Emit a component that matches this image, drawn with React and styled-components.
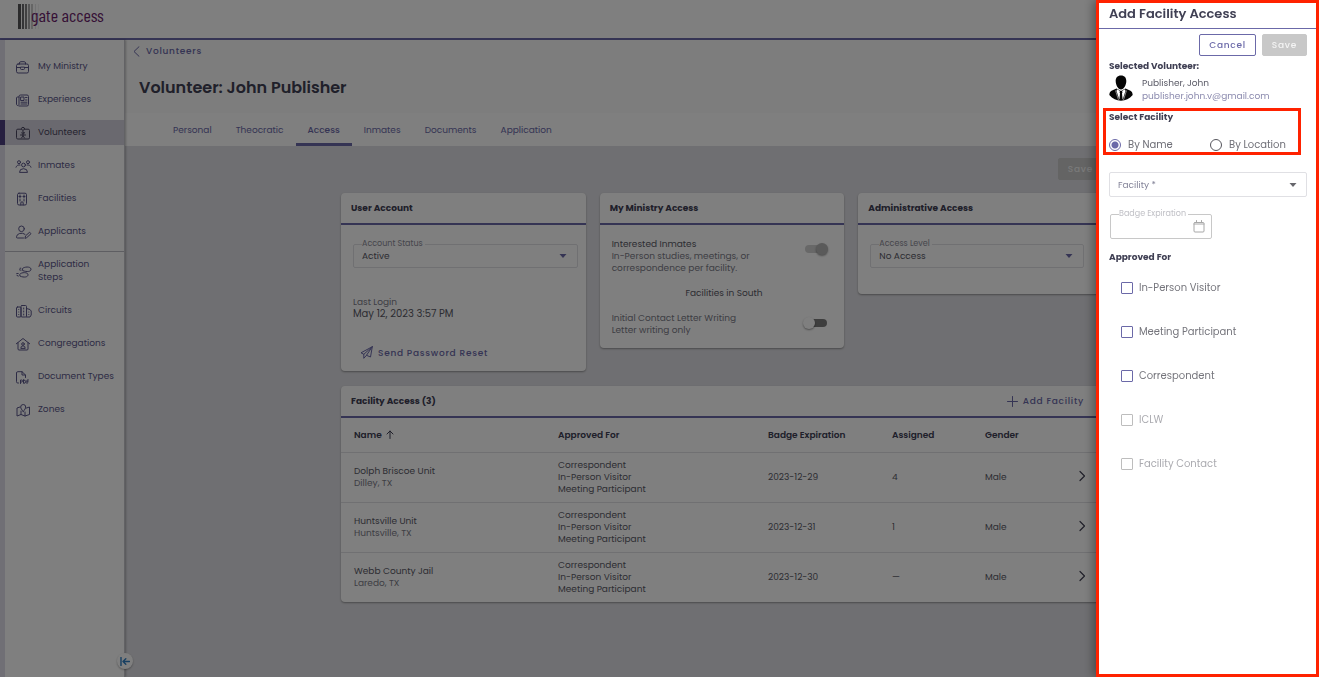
import React, { useState } from "react";
import styled, { createGlobalStyle, ThemeProvider } from "styled-components";

const theme = {
    accent: "#6b69a8",
    nav: "#5b578a",
    heading: "#404054",
    text: "#5a5a66",
    muted: "#7c7c88",
    line: "#e0e0e4",
    canvas: "#dfdfe4",
    mark: "#ff2200",
};

const icons = {
    briefcase: <><rect x="1.5" y="5" width="12" height="9" rx="1.6" /><path d="M4.5 5V4a1.3 1.3 0 0 1 1.3-1.3h3.4A1.3 1.3 0 0 1 10.5 4v1M1.5 8.5h4M9.5 8.5h4M5.5 8.5v1a1 1 0 0 0 1 1h2a1 1 0 0 0 1-1v-1z" /></>,
    news: <><path d="M4 14h8a1.5 1.5 0 0 0 1.5-1.5v-8A1.5 1.5 0 0 0 12 3H5.5A1.5 1.5 0 0 0 4 4.5v8a1.3 1.3 0 0 1-2.5 0V6A1 1 0 0 1 2.5 5H4" /><rect x="6" y="5" width="3" height="3.5" /><path d="M10.5 5.5H12M10.5 8H12M6 10.2h6M6 12h6" /></>,
    badge: <><path d="M6 4.2H2.8A1.3 1.3 0 0 0 1.5 5.5v7.2A1.3 1.3 0 0 0 2.8 14h10.4a1.3 1.3 0 0 0 1.3-1.3V5.5a1.3 1.3 0 0 0-1.3-1.3H10" /><circle cx="8" cy="3.8" r="1.5" /><circle cx="8" cy="7.8" r="1.1" /><path d="M5.5 10h5M8 9.5V11l-1.5 2M8 11l1.5 2" /></>,
    group: <><circle cx="4" cy="4.2" r="1.5" /><circle cx="13" cy="4.2" r="1.5" /><circle cx="8.5" cy="7" r="1.9" /><path d="M4.5 14a4 3.3 0 0 1 8 0zM1 9.2A3 3 0 0 1 5 7M16 9.2A3 3 0 0 0 12 7" /></>,
    building: <><rect x="2.5" y="2.2" width="9" height="11.8" rx="1.5" /><path d="M5 4v3M9 4v3M4 5.5h2M8 5.5h2M5 8.5V10M9 8.5V10M5.8 14v-2a1.2 1.2 0 0 1 2.4 0v2" /></>,
    applicant: <><circle cx="6.5" cy="4.8" r="2.8" /><path d="M8.5 14h-6a1 1 0 0 1-1-1.2A5 3.8 0 0 1 10 10.3M10 14l.6-2.2 4-3.6L16 9.7l-4 3.7z" /></>,
    steps: <><path d="M7.5 5.5C9 3.6 15.5 3.2 16 6c.3 2.8-4 3.2-8 1.7zM5.8 5.2 5 5.3M6 7.2l-1.5-.4M5 11c1.5-2 7.8-1.9 8 .6s-4 3.3-7.7 1.6zM3.2 10.5l-1.5.1M3.3 13 2 12.5" /></>,
    circuits: <><rect x="1.5" y="4" width="4.5" height="10" rx="1" /><rect x="6" y="2.5" width="5.5" height="11.5" rx="1" /><path d="M11.5 5.5l3.5 1L16.2 8v4L15 14h-3.5M3.7 6.5h.1M3.7 9h.1M3.7 11.5h.1M8.7 5v1M8.7 8v1M8.7 11v1M13.8 9v.1M13.8 11.5v.1" /></>,
    house: <><path d="M1.3 7.8 8 2.5l6.700 5.300M3 6.700V13a1 1 0 0 0 1 1h8a1 1 0 0 0 1-1V6.700" /><circle cx="8" cy="8" r="1.3" /><path d="M5.8 12a2.2 2.2 0 0 1 4.4 0z" /></>,
    pdf: <><path d="M3.5 14h-.7a1.3 1.3 0 0 1-1.3-1.3V4a1.3 1.3 0 0 1 1.3-1.3H7L10.5 6v2.500M7 2.700V6h3.500" /><path d="M5.5 14.5V11h1a1 1 0 0 1 0 2h-1M8.5 11v3.3H9a1.6 1.6 0 0 0 0-3.3zM13.5 11H12v3.5M12 12.8h1.2" /></>,
    map: <><path d="M5 5 2 6v8l4-1.5 4 1.5 4.5-1.5V5l-3 1M6 9v3.500M10 10v4" /><path d="M8.2 9.5C6.6 7.5 5.7 6.3 5.7 5a2.5 2.5 0 0 1 5 0c0 1.3-.9 2.5-2.5 4.5z" /></>,
};

const mainLinks = [
    { label: "My Ministry", icon: "briefcase" },
    { label: "Experiences", icon: "news" },
    { label: "Volunteers", icon: "badge" },
    { label: "Inmates", icon: "group" },
    { label: "Facilities", icon: "building" },
    { label: "Applicants", icon: "applicant" },
];

const adminLinks = [
    { label: "Application Steps", icon: "steps" },
    { label: "Circuits", icon: "circuits" },
    { label: "Congregations", icon: "house" },
    { label: "Document Types", icon: "pdf" },
    { label: "Zones", icon: "map" },
];

const tabs = ["Personal", "Theocratic", "Access", "Inmates", "Documents", "Application"];

const facilities = [
    { name: "Dolph Briscoe Unit", city: "Dilley, TX", expires: "2023-12-29", assigned: "4", gender: "Male" },
    { name: "Huntsville Unit", city: "Huntsville, TX", expires: "2023-12-31", assigned: "1", gender: "Male" },
    { name: "Webb County Jail", city: "Laredo, TX", expires: "2023-12-30", assigned: "—", gender: "Male" },
];

const approvals = [
    { label: "In-Person Visitor" },
    { label: "Meeting Participant" },
    { label: "Correspondent" },
    { label: "ICLW", disabled: true },
    { label: "Facility Contact", disabled: true },
];

function NavGroup({ links }) {
    return (
        <NavList>
            {links.map((link) => (
                <li key={link.label}>
                    <NavLink href="#" $active={link.label === "Volunteers"}>
                        <Icon width="17" height="16" viewBox="0 0 17 16">{icons[link.icon]}</Icon>
                        <span>{link.label}</span>
                    </NavLink>
                </li>
            ))}
        </NavList>
    )
}

function OutlinedSelect({ id, label, value }) {
    return (
        <Outlined>
            <legend><label htmlFor={id}>{label}</label></legend>
            <SelectRow>
                <select id={id} defaultValue={value}>
                    <option>{value}</option>
                </select>
                <Caret />
            </SelectRow>
        </Outlined>
    )
}

function Caret() {
    return (
        <svg width="10" height="6" viewBox="0 0 10 6" aria-hidden="true">
            <path d="M1.5 1h7L5 5z" fill="currentColor" />
        </svg>
    )
}

function Logo() {
    const bars = [[0, 3, .8], [4, 2, .7], [7, 2, .6], [10, 2, .4], [13, 2, .25], [17, 1, .12], [20, 1, .06]];
    return (
        <Brand href="#">
            <svg width="24" height="25" viewBox="0 0 24 25" aria-hidden="true">
                {bars.map(([x, w, o]) => <rect key={x} x={x} width={w} height="25" fill="#2c2c30" opacity={o} />)}
            </svg>
            <span>gate access</span>
        </Brand>
    )
}

function FacilityTable() {
    return (
        <Table>
            <colgroup>
                <col className="name" />
                <col className="approved" />
                <col className="expires" />
                <col className="assigned" />
                <col className="gender" />
                <col />
            </colgroup>
            <thead>
                <tr>
                    <th>
                        Name
                        <Icon width="8" height="9" viewBox="0 0 8 9"><path d="M4 8.5V1M1 4l3-3 3 3" /></Icon>
                    </th>
                    <th>Approved For</th>
                    <th>Badge Expiration</th>
                    <th>Assigned</th>
                    <th>Gender</th>
                    <th></th>
                </tr>
            </thead>
            <tbody>
                {facilities.map((f) => (
                    <tr key={f.name}>
                        <td>{f.name}<small>{f.city}</small></td>
                        <td>Correspondent<br />In-Person Visitor<br />Meeting Participant</td>
                        <td>{f.expires}</td>
                        <td>{f.assigned}</td>
                        <td>{f.gender}</td>
                        <td className="open">
                            <PlainButton aria-label={"Open " + f.name}>
                                <Icon width="8" height="12" viewBox="0 0 8 12"><path d="M2 1.5 6.5 6 2 10.5" strokeWidth="1.2" /></Icon>
                            </PlainButton>
                        </td>
                    </tr>
                ))}
            </tbody>
        </Table>
    )
}

function FacilityDrawer() {
    const [mode, setMode] = useState("name");
    const [approved, setApproved] = useState([]);

    const toggle = (label) => setApproved(
        approved.includes(label) ? approved.filter((a) => a !== label) : [...approved, label]
    );

    return (
        <Drawer aria-label="Add Facility Access">
            <DrawerTitle>Add Facility Access</DrawerTitle>
            <DrawerBody>
                <Actions>
                    <OutlineButton>Cancel</OutlineButton>
                    <SaveButton disabled>Save</SaveButton>
                </Actions>
                <Label>Selected Volunteer:</Label>
                <Person>
                    <svg width="24" height="26" viewBox="0 0 24 26" aria-hidden="true">
                        <path d="M12 .5c3.600 0 5.400 2.400 5.300 5.800C17.200 10 15 14.500 12 14.500S6.800 10 6.700 6.300C6.600 2.900 8.400.500 12 .500z" fill="#050505" />
                        <path d="M7.500 13.500 12 16l4.500-2.500 5 2.300c1.400.700 2 2.200 2.200 4.200C20.500 24 16.500 25.700 12 25.700S3.500 24 .300 20c.200-2 .800-3.500 2.200-4.200z" fill="#050505" />
                        <path d="M8 14.200 11 16l-.500 1.200.500 1-.600 6.500L7.500 16zM16 14.200 13 16l.500 1.200-.5 1 .600 6.500L16.500 16z" fill="#fff" />
                        <path d="M6.500 15.500 9.500 25M17.500 15.500 14.500 25" stroke="#fff" strokeWidth=".5" />
                    </svg>
                    <div>
                        <p>Publisher, John</p>
                        <a href="mailto:publisher.john.v@gmail.com">publisher.john.v@gmail.com</a>
                    </div>
                </Person>
                <Marked>
                    <legend>Select Facility</legend>
                    <div>
                        <Choice>
                            <input type="radio" name="mode" checked={mode === "name"} onChange={() => setMode("name")} />
                            By Name
                        </Choice>
                        <Choice>
                            <input type="radio" name="mode" checked={mode === "location"} onChange={() => setMode("location")} />
                            By Location
                        </Choice>
                    </div>
                </Marked>
                <PlainSelect>
                    <select aria-label="Facility" defaultValue="">
                        <option value="">Facility *</option>
                    </select>
                    <Caret />
                </PlainSelect>
                <DateField disabled>
                    <legend><label htmlFor="badge">Badge Expiration</label></legend>
                    <SelectRow>
                        <input id="badge" type="text" />
                        <Icon width="12" height="13" viewBox="0 0 12 13">
                            <rect x="1" y="2.5" width="10" height="9.5" rx="1" />
                            <path d="M1 4h10M3.5 .5v2M8.5 .5v2" />
                        </Icon>
                    </SelectRow>
                </DateField>
                <Label>Approved For</Label>
                <CheckList>
                    {approvals.map((a) => (
                        <Check key={a.label} $disabled={a.disabled}>
                            <input
                                type="checkbox"
                                disabled={a.disabled}
                                checked={approved.includes(a.label)}
                                onChange={() => toggle(a.label)}
                            />
                            {a.label}
                        </Check>
                    ))}
                </CheckList>
            </DrawerBody>
        </Drawer>
    )
}

export default function App() {
    const [letters, setLetters] = useState(false);

    return (
        <ThemeProvider theme={theme}>
            <GlobalStyle />
            <Page>
                <TopBar><Logo /></TopBar>
                <Columns>
                    <Sidebar>
                        <NavGroup links={mainLinks} />
                        <NavGroup links={adminLinks} />
                        <Collapse aria-label="Collapse menu">
                            <Icon width="10" height="9" viewBox="0 0 10 9"><path d="M1 .5v8M9.5 4.5H3M5.8 1.7 3 4.5l2.8 2.8" strokeWidth="1.4" /></Icon>
                        </Collapse>
                    </Sidebar>
                    <Main>
                        <PageHead>
                            <BackLink href="#">
                                <Icon width="7" height="11" viewBox="0 0 7 11"><path d="M6 .7 1 5.5l5 4.8" /></Icon>
                                Volunteers
                            </BackLink>
                            <h1>Volunteer: John Publisher</h1>
                        </PageHead>
                        <Tabs>
                            {tabs.map((t) => <Tab key={t} href="#" $active={t === "Access"}>{t}</Tab>)}
                        </Tabs>
                        <Content>
                            <Actions><SaveButton disabled>Save</SaveButton></Actions>
                            <Cards>
                                <Card>
                                    <CardHead><h2>User Account</h2></CardHead>
                                    <CardBody>
                                        <OutlinedSelect id="status" label="Account Status" value="Active" />
                                        <Login>
                                            <p>Last Login</p>
                                            <strong>May 12, 2023 3:57 PM</strong>
                                        </Login>
                                        <TextButton>
                                            <Icon width="13" height="13" viewBox="0 0 13 13">
                                                <path d="M12.300.7 1 6.800l2.800 1.500L12.300.700 10.500 11 6.500 9.300M3.800 8.300v4l2.700-3L12.300.7" />
                                            </Icon>
                                            Send Password Reset
                                        </TextButton>
                                    </CardBody>
                                </Card>
                                <Card>
                                    <CardHead><h2>My Ministry Access</h2></CardHead>
                                    <CardBody>
                                        <Setting>
                                            <label htmlFor="interested">
                                                <b>Interested Inmates</b><br />
                                                In-Person studies, meetings, or correspondence per facility.
                                            </label>
                                            <Switch id="interested" defaultChecked disabled />
                                        </Setting>
                                        <Region>Facilities in South</Region>
                                        <Setting>
                                            <label htmlFor="letters">Initial Contact Letter Writing<br />Letter writing only</label>
                                            <Switch id="letters" checked={letters} onChange={() => setLetters(!letters)} />
                                        </Setting>
                                    </CardBody>
                                </Card>
                                <Card>
                                    <CardHead><h2>Administrative Access</h2></CardHead>
                                    <CardBody $wide>
                                        <OutlinedSelect id="level" label="Access Level" value="No Access" />
                                    </CardBody>
                                </Card>
                            </Cards>
                            <Card>
                                <CardHead>
                                    <h2>Facility Access (3)</h2>
                                    <PlainButton>
                                        <Icon width="11" height="11" viewBox="0 0 11 11"><path d="M5.5 .5v10M.5 5.5h10" /></Icon>
                                        Add Facility
                                    </PlainButton>
                                </CardHead>
                                <FacilityTable />
                            </Card>
                        </Content>
                    </Main>
                </Columns>
            </Page>
            <Backdrop />
            <FacilityDrawer />
        </ThemeProvider>
    )
}


const GlobalStyle = createGlobalStyle`
    * {
        box-sizing: border-box;
    }

    body {
        margin: 0;
    }

    body, button, input, select {
        font-family: Poppins, Inter, "Open Sans", sans-serif;
        font-size: 9px;
        line-height: 12px;
    }

    h1, h2, h3, p, ul, fieldset {
        margin: 0;
        padding: 0;
    }

    a {
        text-decoration: none;
    }
`

const Icon = styled.svg`
    flex: none;
    fill: none;
    stroke: currentColor;
    stroke-width: 1;
    stroke-linecap: round;
    stroke-linejoin: round;
`

const Page = styled.div`
    display: flex;
    flex-direction: column;
    min-height: 100vh;
    background: #fff;
    color: ${props => props.theme.text};
`

const TopBar = styled.header`
    display: flex;
    height: 40px;
    padding: 4px 18px;
    border-bottom: 2px solid ${props => props.theme.accent};
`

const Brand = styled.a`
    display: flex;
    color: #6d1f6d;
    font: 400 18px/23px "Barlow Condensed", "Roboto Condensed", "Liberation Sans Narrow", Roboto, sans-serif;

    span {
        margin-left: -11px;
    }
`

const Columns = styled.div`
    display: flex;
    flex: 1;
`

const Sidebar = styled.nav`
    position: relative;
    width: 125px;
    flex: none;
    padding-top: 14px;
    border-left: 5px solid #e0dfea;
    border-right: 1px solid #c4c4ca;
    box-shadow: 1px 0 2px rgba(0, 0, 0, .25);
`

const NavList = styled.ul`
    display: flex;
    flex-direction: column;
    gap: 8px;
    list-style: none;

    & + & {
        margin-top: 7px;
        border-top: 1px solid #bcbcc4;
    }
`

const NavLink = styled.a`
    display: flex;
    align-items: center;
    gap: 6px;
    min-height: 25px;
    margin-left: -5px;
    padding: 6px 8px 6px 10px;
    line-height: 13px;
    color: ${props => props.$active ? "#4a4660" : props.theme.nav};
    background: ${props => props.$active ? "#d5d3df" : "none"};
    border-left: 5px solid ${props => props.$active ? "#4c3f80" : "transparent"};

    svg {
        margin: -2px 0;
    }
`

const Collapse = styled.button`
    position: absolute;
    right: -9px;
    bottom: 8px;
    display: flex;
    align-items: center;
    justify-content: center;
    width: 16px;
    height: 16px;
    padding: 0;
    border: none;
    border-radius: 50%;
    background: #fff;
    color: #2f7fc4;
    box-shadow: 0 1px 2px rgba(0, 0, 0, .3);
`

const Main = styled.main`
    display: flex;
    flex-direction: column;
    flex: 1;
    min-width: 0;
`

const PageHead = styled.div`
    height: 73px;
    padding: 4px 8px;
    background: #fafafa;

    h1 {
        margin: 18px 6px 0;
        font-size: 16px;
        line-height: 24px;
        font-weight: 600;
        color: ${props => props.theme.heading};
    }
`

const BackLink = styled.a`
    display: flex;
    align-items: center;
    gap: 6px;
    line-height: 14px;
    font-weight: 500;
    letter-spacing: 0.08em;
    color: ${props => props.theme.accent};
`

const Tabs = styled.div`
    display: flex;
    padding-left: 36px;
`

const Tab = styled.a`
    padding: 11px 12px 7px;
    border-bottom: 3px solid ${props => props.$active ? props.theme.accent : "transparent"};
    font-weight: ${props => props.$active ? 500 : 400};
    color: ${props => props.theme.accent};
`

const Content = styled.div`
    display: flex;
    flex-direction: column;
    flex: 1;
    padding: 12px 216px;
    background: ${props => props.theme.canvas};
`

const Actions = styled.div`
    display: flex;
    justify-content: flex-end;
    gap: 6px;
`

const OutlineButton = styled.button`
    height: 22px;
    padding: 0 9px;
    border: 1px solid ${props => props.theme.accent};
    border-radius: 2px;
    background: #fff;
    color: ${props => props.theme.accent};
    font-weight: 500;
    letter-spacing: 0.08em;
`

const SaveButton = styled(OutlineButton)`
    border-color: #c8c8c8;
    background: #c8c8c8;
    color: #f4f4f4;
`

const PlainButton = styled.button`
    display: inline-flex;
    align-items: center;
    gap: 5px;
    padding: 0;
    border: none;
    background: none;
    color: ${props => props.theme.accent};
    font-weight: 500;
    letter-spacing: 0.08em;
`

const TextButton = styled(PlainButton)`
    display: flex;
    margin: 26px 7px 0;
`

const Cards = styled.div`
    display: grid;
    grid-template-columns: repeat(3, 1fr);
    align-items: start;
    gap: 14px;
    margin: 13px 0 15px;
`

const Card = styled.section`
    overflow: hidden;
    border-radius: 4px;
    background: #fff;
    box-shadow: 0 1px 2px rgba(0, 0, 0, .35);
`

const CardHead = styled.div`
    display: flex;
    align-items: center;
    justify-content: space-between;
    height: 32px;
    padding: 0 19px 0 10px;
    border-bottom: 2px solid ${props => props.theme.accent};

    h2 {
        font-size: 9px;
        font-weight: 700;
        color: ${props => props.theme.heading};
    }
`

const CardBody = styled.div`
    padding: 13px ${props => props.$wide ? "19px 26px" : "8px 12px"} 12px;
`

const Outlined = styled.fieldset`
    min-width: 0;
    padding: 0 9px 5px 8px;
    border: 1px solid ${props => props.theme.line};
    border-radius: 2px;

    legend {
        padding: 0 2px 0 0;
        font-size: 8px;
        color: #8c8c98;
    }
`

const SelectRow = styled.div`
    display: flex;
    align-items: center;
    color: ${props => props.theme.accent};

    select, input {
        appearance: none;
        flex: 1;
        min-width: 0;
        height: 12px;
        padding: 0;
        border: none;
        background: none;
        color: ${props => props.theme.text};
    }
`

const Login = styled.div`
    margin-top: 28px;
    color: ${props => props.theme.muted};

    strong {
        font-size: 10px;
        font-weight: 400;
        color: ${props => props.theme.text};
    }
`

const Setting = styled.div`
    display: flex;
    justify-content: space-between;
    align-items: flex-start;
    padding-right: 9px;
    color: ${props => props.theme.muted};

    label {
        max-width: 150px;
    }

    b {
        font-weight: 400;
        color: ${props => props.theme.text};
    }
`

const Region = styled.p`
    margin: 13px 0;
    text-align: center;
`

const Switch = styled.input.attrs({ type: "checkbox", role: "switch" })`
    appearance: none;
    position: relative;
    width: 22px;
    height: 8px;
    margin: 7px 0 0;
    border-radius: 4px;
    background: #7d7d7d;

    &::before {
        content: "";
        position: absolute;
        top: -2px;
        left: -2px;
        width: 12px;
        height: 12px;
        border-radius: 50%;
        background: #fff;
        box-shadow: 0 1px 2px rgba(0, 0, 0, .4);
    }

    &:checked {
        background: #d0d0d0;
    }

    &:checked::before {
        left: 11px;
        background: #b4b4b4;
    }
`

const Table = styled.table`
    width: 100%;
    table-layout: fixed;
    border-collapse: collapse;

    .name { width: 204px; }
    .approved { width: 210px; }
    .expires { width: 124px; }
    .assigned { width: 93px; }
    .gender { width: 60px; }

    th, td {
        padding: 0 0 0 13px;
        text-align: left;
    }

    th {
        height: 34px;
        font-weight: 600;
        color: ${props => props.theme.heading};
    }

    th svg {
        margin-left: 4px;
        vertical-align: -1px;
    }

    td {
        height: 50px;
        border-top: 1px solid ${props => props.theme.line};
    }

    small {
        display: block;
        font-size: 9px;
        color: ${props => props.theme.muted};
    }

    .open {
        padding-right: 17px;
        text-align: right;
    }

    .open button {
        color: ${props => props.theme.heading};
    }
`

const Backdrop = styled.div`
    position: fixed;
    inset: 0;
    background: rgba(0, 0, 0, .5);
`

const Drawer = styled.aside`
    position: fixed;
    top: 0;
    right: 0;
    bottom: 0;
    width: 223px;
    border: 3px solid ${props => props.theme.mark};
    background: #fff;
    color: ${props => props.theme.text};
    box-shadow: -2px 0 10px rgba(0, 0, 0, .4);
`

const DrawerTitle = styled.h2`
    padding: 0 10px 4px;
    border-bottom: 1px solid ${props => props.theme.accent};
    font-size: 13px;
    line-height: 21px;
    font-weight: 600;
    color: ${props => props.theme.heading};
`

const DrawerBody = styled.div`
    padding: 5px 9px 0 10px;
`

const Label = styled.h3`
    margin-top: 4px;
    font-size: 9px;
    font-weight: 700;
    color: ${props => props.theme.heading};
`

const Person = styled.div`
    display: flex;
    align-items: flex-start;
    gap: 9px;
    margin-top: 3px;
    line-height: 13px;

    div {
        padding-top: 2px;
    }

    a {
        color: #8b8aae;
    }
`

const Marked = styled.fieldset`
    display: flow-root;
    margin: 5px 6px 17px -6px;
    padding: 0 3px;
    border: 3px solid ${props => props.theme.mark};

    legend {
        float: left;
        padding: 0;
        font-weight: 700;
        color: ${props => props.theme.heading};
    }

    div {
        clear: both;
        display: grid;
        grid-template-columns: 101px 1fr;
        padding-top: 15px;
    }
`

const Choice = styled.label`
    display: flex;
    align-items: center;
    gap: 7px;
    font-size: 10px;
    line-height: 14px;
    color: #6e6e76;

    input {
        appearance: none;
        width: 12px;
        height: 12px;
        margin: 0;
        border: 1px solid #55555c;
        border-radius: 50%;
    }

    input:checked {
        border-color: ${props => props.theme.accent};
        background: radial-gradient(${props => props.theme.accent} 3px, transparent 4px);
    }
`

const PlainSelect = styled.div`
    display: flex;
    align-items: center;
    height: 25px;
    padding: 0 8px;
    border: 1px solid ${props => props.theme.line};
    border-radius: 2px;
    color: #66666c;

    select {
        appearance: none;
        flex: 1;
        padding: 0;
        border: none;
        background: none;
        color: #85859a;
    }
`

const DateField = styled(Outlined)`
    width: 102px;
    margin: 11px 1px 12px;
    border-color: #c8c8c8;

    legend {
        color: #c0c0c6;
    }

    svg {
        color: #a8a8a8;
        margin-right: -3px;
    }
`

const CheckList = styled.div`
    display: flex;
    flex-direction: column;
    gap: 30px;
    padding: 18px 12px;
`

const Check = styled.label`
    display: flex;
    align-items: center;
    gap: 6px;
    font-size: 10px;
    line-height: 14px;
    color: ${props => props.$disabled ? "#ababb0" : "#75757c"};

    input {
        appearance: none;
        width: 12px;
        height: 12px;
        margin: 0;
        border: 1px solid ${props => props.$disabled ? "#bdbdbd" : props.theme.accent};
        border-radius: 1px;
    }

    input:checked {
        background: ${props => props.theme.accent};
    }
`
